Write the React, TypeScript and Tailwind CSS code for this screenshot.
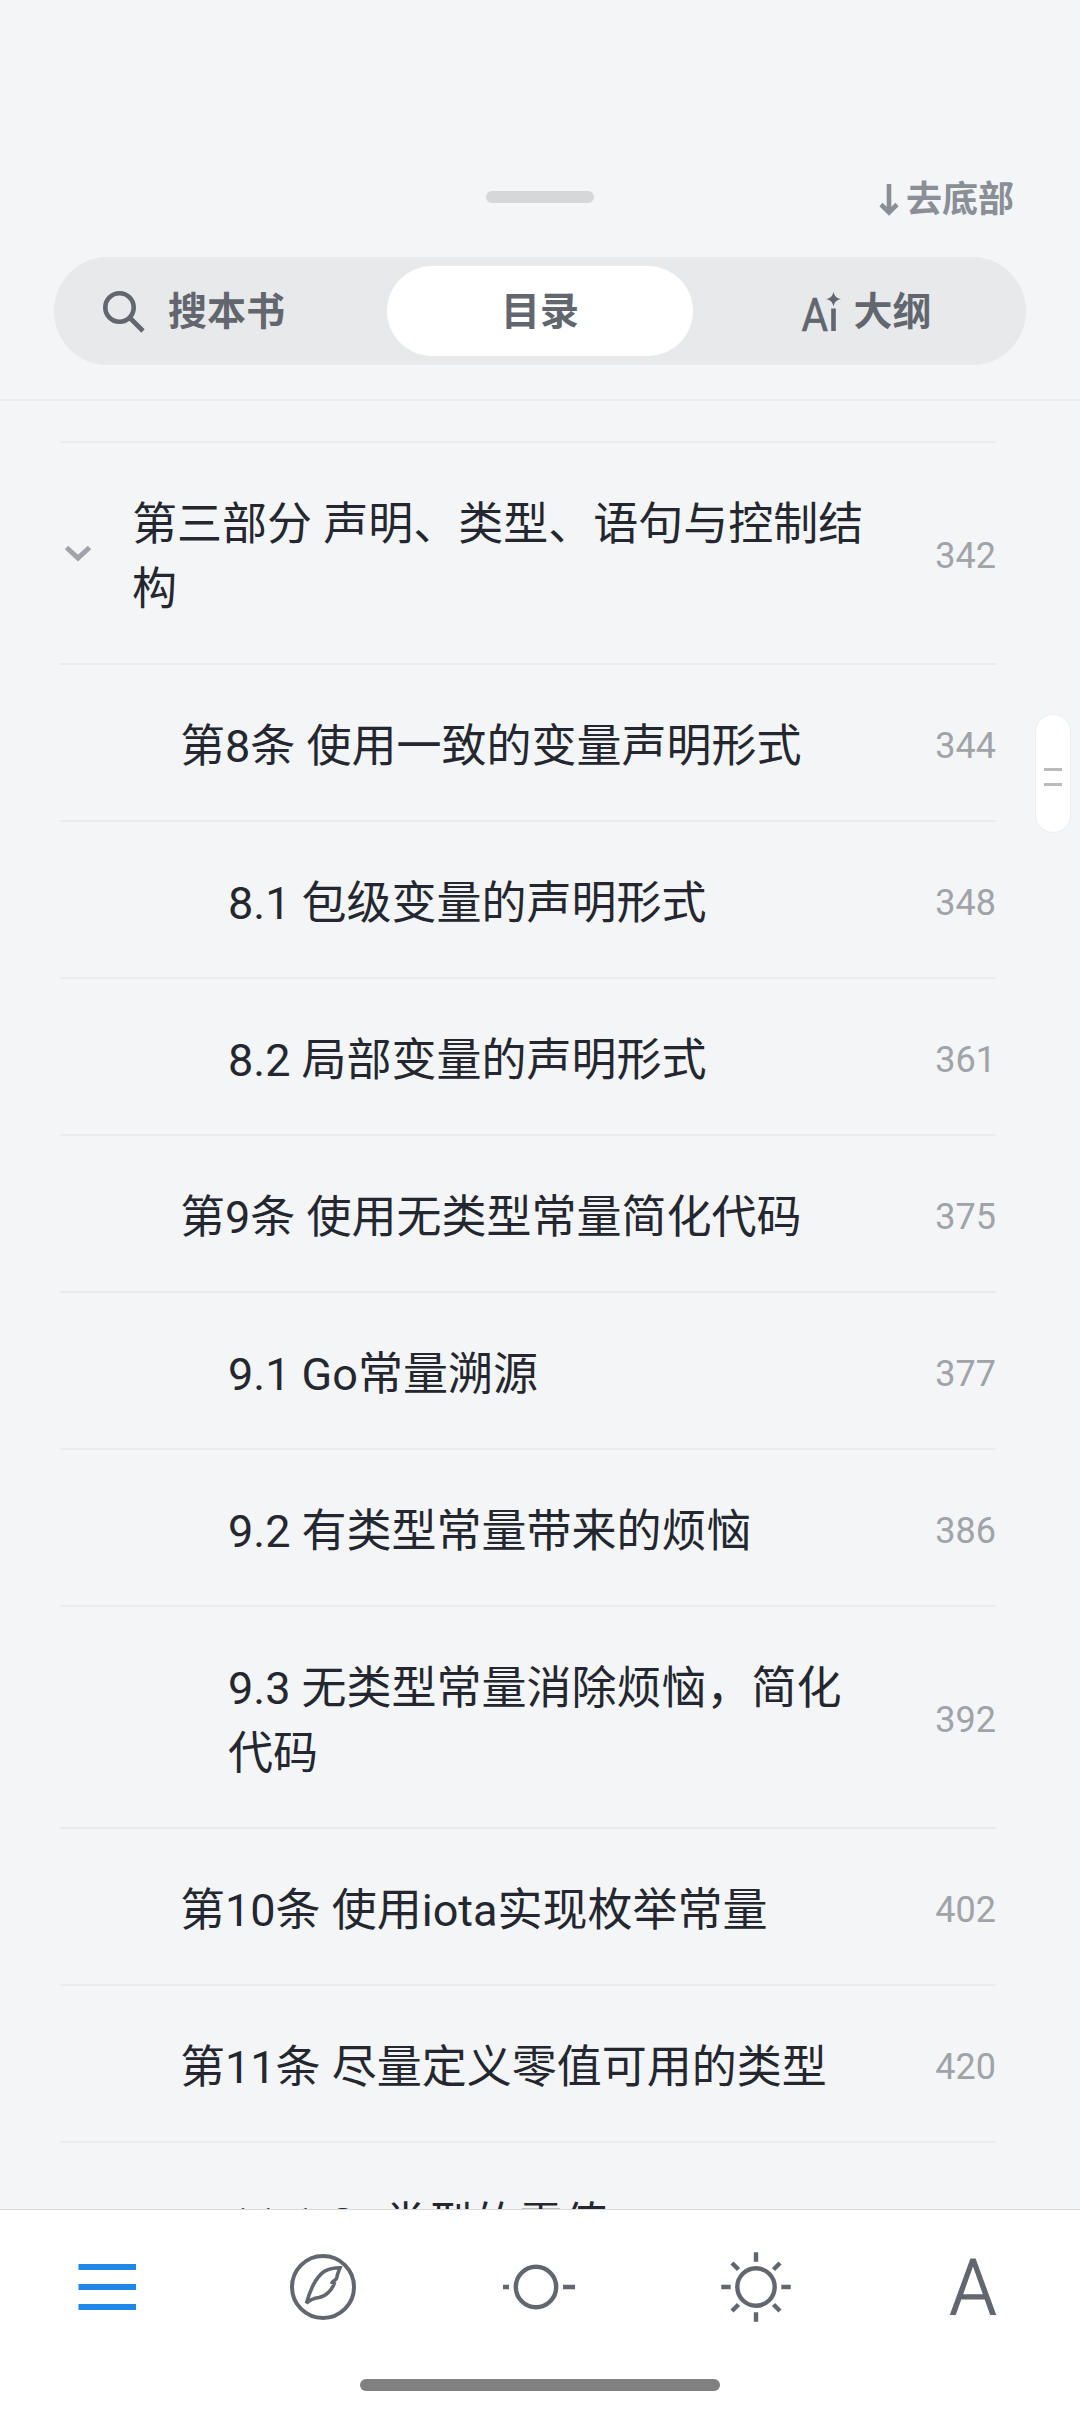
import { useState } from "react"
import { clsx } from "clsx"

type Chapter = {
  title: string
  page: number
  level: 0 | 1 | 2
  expanded?: boolean
}

const chapters: Chapter[] = [
  { title: "第三部分 声明、类型、语句与控制结构", page: 342, level: 0, expanded: true },
  { title: "第8条 使用一致的变量声明形式", page: 344, level: 1 },
  { title: "8.1 包级变量的声明形式", page: 348, level: 2 },
  { title: "8.2 局部变量的声明形式", page: 361, level: 2 },
  { title: "第9条 使用无类型常量简化代码", page: 375, level: 1 },
  { title: "9.1 Go常量溯源", page: 377, level: 2 },
  { title: "9.2 有类型常量带来的烦恼", page: 386, level: 2 },
  { title: "9.3 无类型常量消除烦恼，简化代码", page: 392, level: 2 },
  { title: "第10条 使用iota实现枚举常量", page: 402, level: 1 },
  { title: "第11条 尽量定义零值可用的类型", page: 420, level: 1 },
  { title: "11.1 Go类型的零值", page: 420, level: 2 },
]

const indent = ["w-[72px]", "w-[120px]", "w-[168px]"]

function SearchIcon() {
  return (
    <svg width="44" height="44" viewBox="0 0 44 44" fill="none" stroke="currentColor" strokeWidth="4.6">
      <circle cx="18.5" cy="17.5" r="14.2" />
      <path d="M28.5 27.5 42 41" />
    </svg>
  )
}

function AiIcon() {
  return (
    <svg width="42" height="42" viewBox="0 0 42 42" fill="currentColor">
      <text x="1.5" y="39.5" fontSize="46" fontWeight="400" textLength="26.5" lengthAdjust="spacingAndGlyphs" stroke="currentColor" strokeWidth="0.7">
        A
      </text>
      <rect x="31.2" y="17.5" width="4.6" height="22.5" />
      <path d="M33.5 0.700c1.300 4.800 2.600 6.100 7.500 7.400-4.900 1.300-6.200 2.600-7.500 7.400-1.300-4.800-2.600-6.100-7.500-7.400 4.900-1.300 6.200-2.600 7.500-7.400Z" />
    </svg>
  )
}

function MenuIcon() {
  return (
    <svg width="72" height="72" viewBox="0 0 72 72" fill="#2086e8">
      <rect x="6.5" y="13" width="57.5" height="6" />
      <rect x="6.5" y="33" width="57.5" height="6" />
      <rect x="6.5" y="53" width="57.5" height="6" />
    </svg>
  )
}

function FeatherIcon() {
  return (
    <svg width="72" height="72" viewBox="0 0 72 72" fill="none" stroke="currentColor" strokeWidth="4">
      <circle cx="35" cy="36" r="31" />
      <path
        strokeWidth="3.6"
        d="M52 16.8C39.5 17 33.5 20.5 27.5 30C22.5 38 20.5 45 18.5 52.2C22 48.6 25.5 47.3 31 46.5C38.5 45.3 44 38.5 46.2 32.5L44.2 31.5C45.5 29 48.5 29.5 49 26C49.5 22 50.8 20.5 52 16.8Z"
      />
    </svg>
  )
}

function ProgressIcon() {
  return (
    <svg width="72" height="72" viewBox="0 0 72 72" fill="none" stroke="currentColor" strokeWidth="4.4" className="overflow-visible">
      <circle cx="32" cy="36" r="20.2" />
      <path d="M-1 36h6M59 36h12" />
    </svg>
  )
}

function SunIcon() {
  return (
    <svg width="72" height="72" viewBox="0 0 72 72" fill="none" stroke="currentColor" strokeWidth="4.4">
      <circle cx="36" cy="36" r="18.7" />
      <path d="M36 1.3v9.4M36 61.3v9.4M1.3 36h9.4M61.3 36h9.4M12 12l6.5 6.5M53.5 53.5l6.5 6.5M12 60l6.5-6.5M53.5 18.5l6.5-6.5" />
    </svg>
  )
}

function FontIcon() {
  return (
    <svg width="72" height="72" viewBox="0 0 72 72" fill="currentColor">
      <text x="13.5" y="64" fontSize="77" fontWeight="300" textLength="47" lengthAdjust="spacingAndGlyphs" stroke="currentColor" strokeWidth="1.2">
        A
      </text>
    </svg>
  )
}

const navItems = [
  { name: "toc", icon: MenuIcon },
  { name: "notes", icon: FeatherIcon },
  { name: "progress", icon: ProgressIcon },
  { name: "brightness", icon: SunIcon },
  { name: "font", icon: FontIcon },
]

const tabs = [
  { label: "搜本书", icon: SearchIcon, className: "gap-[23px] pr-[46px]" },
  { label: "目录", icon: null, className: "" },
  { label: "大纲", icon: AiIcon, className: "gap-[11px] pl-[4px]" },
]

function ChapterRow({ chapter }: { chapter: Chapter }) {
  return (
    <li className="flex items-center border-b-2 border-[#e9ebed] py-[45px]">
      <div className={clsx("shrink-0 pl-[4px]", indent[chapter.level])}>
        {chapter.expanded && (
          <svg width="28" height="18" viewBox="0 0 28 18" fill="none" stroke="#a0a3a8" strokeWidth="5">
            <path d="M2.5 3.5 14 14 25.5 3.5" />
          </svg>
        )}
      </div>
      <span className="flex-1 translate-y-1 text-[45px] leading-[65px] text-[#24272f]">{chapter.title}</span>
      <span className="w-[119px] shrink-0 pt-[6px] text-right text-4xl text-[#a0a3a8]">{chapter.page}</span>
    </li>
  )
}

export default function App() {
  const [activeTab, setActiveTab] = useState("目录")

  return (
    <div className="relative flex h-[2412px] w-[1080px] flex-col overflow-hidden bg-[#f3f5f7] font-['Roboto','Noto_Sans_CJK_SC',sans-serif]">
      <header className="flex h-[401px] shrink-0 flex-col border-b-2 border-[#e9ebed]">
        <div className="grid h-[257px] grid-cols-3 px-[66px] pt-[173px]">
          <div />
          <div className="mt-[18px] h-3 w-[108px] justify-self-center rounded-full bg-[#d5d7d9]" />
          <button className="mt-[2px] flex h-[50px] items-center gap-[7px] justify-self-end text-4xl font-bold text-[#8a8e96]">
            <svg width="20" height="34" viewBox="0 0 20 34" fill="none" stroke="currentColor" strokeWidth="4.6">
              <path d="M10 1v29M2 21.5l8 8 8-8" />
            </svg>
            去底部
          </button>
        </div>

        <div className="mx-[54px] flex h-[108px] items-center justify-between rounded-full bg-[#e7e9ea] px-[9px]">
          {tabs.map((tab) => (
            <button
              key={tab.label}
              onClick={() => setActiveTab(tab.label)}
              className={clsx(
                "flex h-[90px] w-[306px] items-center justify-center rounded-full pt-[2px] text-[39px] leading-[60px] font-bold text-[#62666e]",
                tab.className,
                activeTab === tab.label && "bg-white"
              )}
            >
              {tab.icon && <tab.icon />}
              {tab.label}
            </button>
          ))}
        </div>
      </header>

      <main className="min-h-0 flex-1 overflow-hidden pr-[84px] pl-[60px]">
        <ul className="mt-[40px] border-t-2 border-[#e9ebed]">
          {chapters.map((chapter) => (
            <ChapterRow key={chapter.title} chapter={chapter} />
          ))}
        </ul>
      </main>

      {/* Fast scroll thumb */}
      <div className="absolute top-[714px] right-[9px] flex h-[119px] w-[36px] flex-col items-center justify-center gap-3 rounded-full border border-[#eceef0] bg-white pt-[7px]">
        <div className="h-[3px] w-[18px] bg-[#bbbbbb]" />
        <div className="h-[3px] w-[18px] bg-[#bbbbbb]" />
      </div>

      <nav className="flex h-[203px] shrink-0 flex-col border-t border-[#d9dbde] bg-white pt-[41px] text-[#62666e]">
        <div className="flex">
          {navItems.map((item) => (
            <button key={item.name} className="flex flex-1 justify-center">
              <item.icon />
            </button>
          ))}
        </div>
        <div className="mt-[56px] h-3 w-[360px] self-center rounded-full bg-[#808080]" />
      </nav>
    </div>
  )
}
